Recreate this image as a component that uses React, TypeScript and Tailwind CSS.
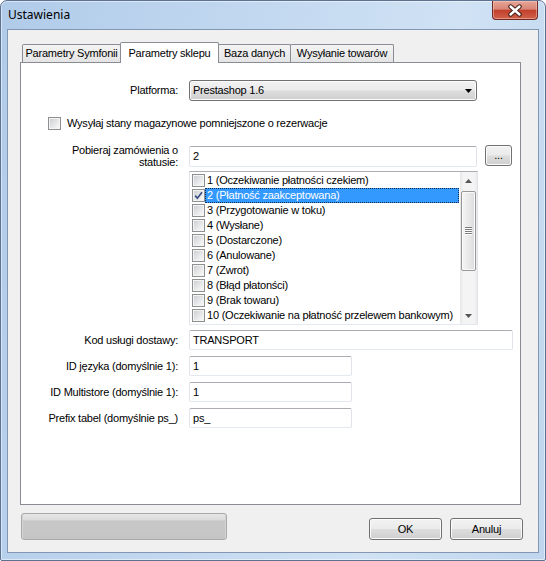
import React from "react";

const statuses = [
  "1 (Oczekiwanie płatności czekiem)",
  "2 (Płatność zaakceptowana)",
  "3 (Przygotowanie w toku)",
  "4 (Wysłane)",
  "5 (Dostarczone)",
  "6 (Anulowane)",
  "7 (Zwrot)",
  "8 (Błąd płatonści)",
  "9 (Brak towaru)",
  "10 (Oczekiwanie na płatność przelewem bankowym)",
];

function CheckBox({ checked = false }: { checked?: boolean }) {
  return (
    <span className="relative flex h-[13px] w-[13px] shrink-0 border border-[#8e8f8f] bg-[#f4f4f4] p-[1px]">
      <span className="block h-full w-full bg-[linear-gradient(135deg,#cdd0d4_0%,#e4e5e7_50%,#f8f8f8_100%)]" />
      {checked && (
        <svg className="absolute left-[1px] top-[1px]" width="9" height="9" viewBox="0 0 9 9">
          <path d="M1.2 4.6 L3.4 7.2 L8 1.2" fill="none" stroke="#3b4e86" strokeWidth="1.7" />
        </svg>
      )}
    </span>
  );
}

function TextBox({ className, value }: { className: string; value: string }) {
  return (
    <div
      className={`flex items-center rounded-[2px] border border-[#e2e3ea] border-t-[#abadb3] border-b-[#e3e9ef] bg-white pl-[3px] text-black ${className}`}
    >
      {value}
    </div>
  );
}

function Btn({ className, children }: { className: string; children: React.ReactNode }) {
  return (
    <div
      className={`flex items-center justify-center rounded-[3px] border border-[#707070] bg-[linear-gradient(to_bottom,#f2f2f2_0%,#ebebeb_48%,#dddddd_52%,#cfcfcf_100%)] shadow-[inset_0_0_0_1px_#fbfbfb] ${className}`}
    >
      {children}
    </div>
  );
}

function CloseButton() {
  return (
    <div className="flex h-[19px] w-[46px] items-center justify-center rounded-b-[4px] border border-t-0 border-[#6e2b23] bg-[linear-gradient(to_bottom,#e6a597_0%,#d88676_45%,#c2412c_52%,#d0604a_100%)] shadow-[inset_0_0_0_1px_rgba(255,210,200,0.45)]">
      <svg width="16" height="13" viewBox="0 0 16 13">
        <path d="M3.5 2.5 L12.5 10.5 M12.5 2.5 L3.5 10.5" stroke="#43211b" strokeWidth="4.4" strokeLinecap="round" />
        <path d="M3.5 2.5 L12.5 10.5 M12.5 2.5 L3.5 10.5" stroke="#ffffff" strokeWidth="2.4" strokeLinecap="round" />
      </svg>
    </div>
  );
}

function Scrollbar() {
  return (
    <div className="flex w-[17px] shrink-0 flex-col bg-[linear-gradient(to_right,#e6e6e6_0%,#f4f4f4_18%,#f4f4f4_82%,#ebebeb_100%)]">
      <div className="flex h-[17px] items-center justify-center">
        <svg width="7" height="4" viewBox="0 0 7 4">
          <path d="M3.5 0 L7 4 H0 Z" fill="#555555" />
        </svg>
      </div>
      <div className="flex-1">
        <div className="mx-[1px] mt-[2px] flex h-[80px] items-center justify-center rounded-[2px] border border-[#979797] bg-[linear-gradient(to_right,#f6f6f6_0%,#e9e9e9_50%,#dcdcdc_100%)] shadow-[inset_0_0_0_1px_#fafafa]">
          <svg width="7" height="8" viewBox="0 0 7 8">
            <path d="M0 0.5 H7 M0 2.5 H7 M0 4.5 H7 M0 6.5 H7" stroke="#7c7c7c" strokeWidth="1" />
            <path d="M0 1.5 H7 M0 3.5 H7 M0 5.5 H7 M0 7.5 H7" stroke="#ffffff" strokeWidth="1" />
          </svg>
        </div>
      </div>
      <div className="flex h-[17px] items-center justify-center">
        <svg width="7" height="4" viewBox="0 0 7 4">
          <path d="M0 0 H7 L3.5 4 Z" fill="#555555" />
        </svg>
      </div>
    </div>
  );
}

function StatusList() {
  return (
    <div className="ml-[168px] mt-[3px] flex h-[154px] w-[289px] border border-[#e2e3ea] border-t-[#abadb3] border-b-[#e3e9ef] bg-white">
      <div className="flex min-w-0 flex-1 flex-col py-[1px]">
        {statuses.map((s, i) => (
          <div key={s} className="flex h-[15px] items-center pl-[2px] pr-[1px]">
            <CheckBox checked={i === 1} />
            {i === 1 ? (
              <span className="flex h-[15px] flex-1 items-center whitespace-nowrap border border-dotted border-[#0f2c55] bg-[#3399ff] pl-[1px] text-white">
                {s}
              </span>
            ) : (
              <span className="flex-1 overflow-hidden whitespace-nowrap pl-[2px]">{s}</span>
            )}
          </div>
        ))}
      </div>
      <Scrollbar />
    </div>
  );
}

function Tab({ className, children }: { className: string; children: React.ReactNode }) {
  return (
    <div
      className={`flex items-center justify-center whitespace-nowrap rounded-t-[2px] border border-b-0 border-[#898c95] ${className}`}
    >
      {children}
    </div>
  );
}

export default function App() {
  return (
    <div className="h-[561px] w-[546px] bg-white font-['Liberation_Sans',Arial,sans-serif] text-[11px] leading-[13px] tracking-[-0.22px] text-black">
      <div className="flex h-full w-full flex-col overflow-hidden rounded-t-[7px] rounded-b-[2px] border border-[#5d7190] bg-[linear-gradient(100deg,#b0cbe9_0%,#c2d8f0_40%,#d0e2f4_72%,#bfd6ee_100%)] shadow-[inset_0_0_0_1px_rgba(255,255,255,0.5)]">
        {/* title bar */}
        <div className="flex h-[28px] shrink-0 items-start justify-between pl-[7px] pr-[7px]">
          <span className="mt-[6px] font-['Noto_Sans','Open_Sans',sans-serif] text-[12px] leading-[16px] tracking-normal text-black">
            Ustawienia
          </span>
          <CloseButton />
        </div>

        {/* client area */}
        <div className="mx-[6px] mb-[7px] flex flex-1 flex-col border border-[#8397b2] bg-[#f0f0f0]">
          <div className="ml-[12px] mt-[12px] flex w-[501px] flex-col">
            {/* tabs */}
            <div className="flex h-[20px] items-end pl-[2px]">
              <Tab className="h-[18px] w-[99px] bg-[linear-gradient(to_bottom,#f4f4f4,#e4e4e4)]">Parametry Symfonii</Tab>
              <Tab className="relative z-10 -mb-px ml-[-1px] h-[21px] w-[99px] bg-white">Parametry sklepu</Tab>
              <Tab className="ml-[-1px] h-[18px] w-[73px] bg-[linear-gradient(to_bottom,#f4f4f4,#e4e4e4)]">Baza danych</Tab>
              <Tab className="ml-[-1px] h-[18px] w-[104px] bg-[linear-gradient(to_bottom,#f4f4f4,#e4e4e4)]">Wysyłanie towarów</Tab>
            </div>

            {/* panel */}
            <div className="flex h-[443px] w-[501px] flex-col border border-[#898c95] bg-white">
              <div className="mt-[17px] flex items-center">
                <span className="w-[157px] text-right">Platforma:</span>
                <div className="ml-[11px] flex h-[21px] w-[288px] items-center justify-between rounded-[3px] border border-[#707070] bg-[linear-gradient(to_bottom,#f2f2f2_0%,#ebebeb_48%,#dddddd_52%,#cfcfcf_100%)] pl-[3px] pr-[4px] shadow-[inset_0_0_0_1px_#fbfbfb]">
                  <span>Prestashop 1.6</span>
                  <svg width="7" height="4" viewBox="0 0 7 4">
                    <path d="M0 0 H7 L3.5 4 Z" fill="#000000" />
                  </svg>
                </div>
              </div>

              <div className="ml-[27px] mt-[16px] flex h-[13px] items-center">
                <CheckBox />
                <span className="ml-[6px] whitespace-nowrap">Wysyłaj stany magazynowe pomniejszone o rezerwacje</span>
              </div>

              <div className="mt-[14px] flex items-start">
                <span className="w-[157px] text-right leading-[12px]">
                  Pobieraj zamówienia o
                  <br />
                  statusie:
                </span>
                <TextBox className="ml-[11px] mt-[2px] h-[21px] w-[288px]" value="2" />
                <Btn className="ml-[8px] mt-[1px] h-[21px] w-[27px]">...</Btn>
              </div>

              <StatusList />

              <div className="mt-[5px] flex items-center">
                <span className="w-[157px] text-right">Kod usługi dostawy:</span>
                <TextBox className="ml-[11px] h-[20px] w-[324px]" value="TRANSPORT" />
              </div>
              <div className="mt-[6px] flex items-center">
                <span className="w-[157px] text-right">ID języka (domyślnie 1):</span>
                <TextBox className="ml-[11px] h-[20px] w-[163px]" value="1" />
              </div>
              <div className="mt-[6px] flex items-center">
                <span className="w-[157px] text-right">ID Multistore (domyślnie 1):</span>
                <TextBox className="ml-[11px] h-[20px] w-[163px]" value="1" />
              </div>
              <div className="mt-[6px] flex items-center">
                <span className="w-[157px] whitespace-nowrap text-right">Prefix tabel (domyślnie ps_)</span>
                <TextBox className="ml-[11px] h-[20px] w-[163px]" value="ps_" />
              </div>
            </div>
          </div>

          {/* bottom row */}
          <div className="flex pl-[13px] pr-[15px] pt-[8px]">
            <div className="h-[27px] w-[206px] rounded-[3px] border border-[#a9a9a9] bg-[linear-gradient(to_bottom,#e6e6e6_0%,#dcdcdc_22%,#c8c8c8_28%,#c5c5c5_100%)] shadow-[inset_1px_0_0_#d4d4d4,inset_-1px_0_0_#d4d4d4]" />
            <div className="flex-1" />
            <div className="mt-[5px] flex gap-[8px]">
              <Btn className="h-[22px] w-[73px]">OK</Btn>
              <Btn className="h-[22px] w-[73px]">Anuluj</Btn>
            </div>
          </div>
        </div>
      </div>
    </div>
  );
}
